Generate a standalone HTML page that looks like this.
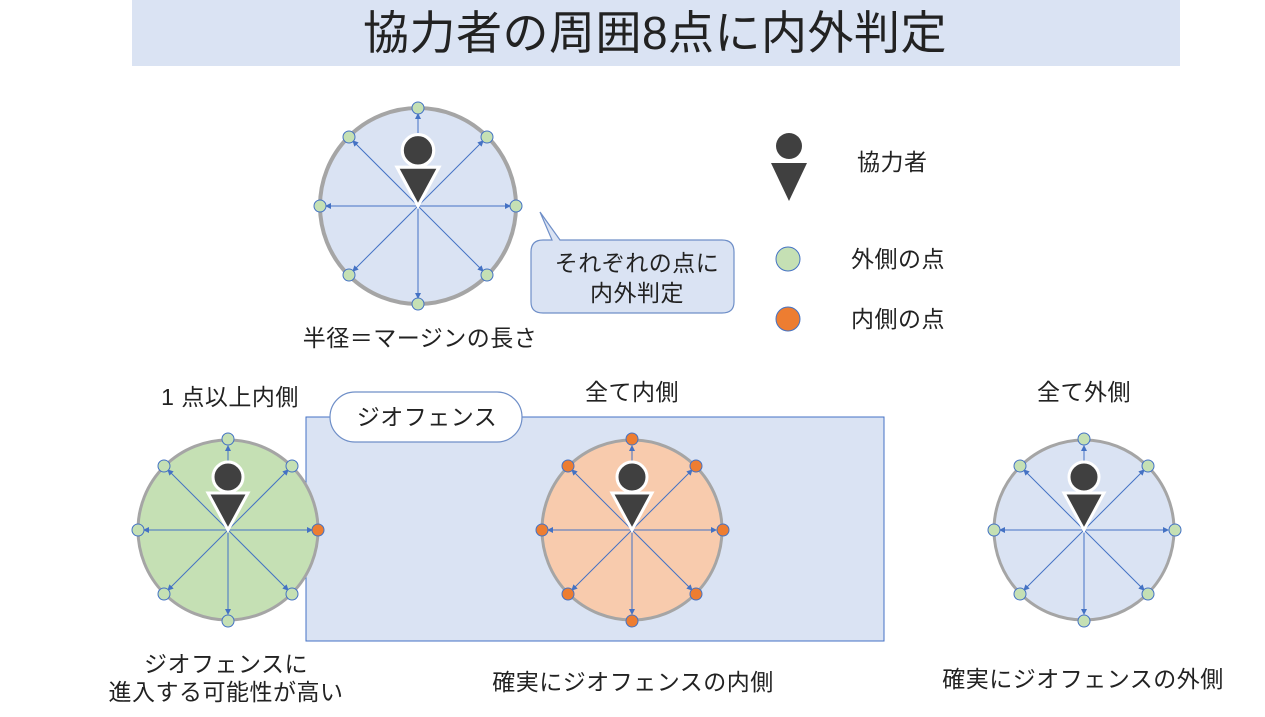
<!DOCTYPE html>
<html><head><meta charset="utf-8"><style>
body{margin:0;background:#fff;width:1265px;height:712px;overflow:hidden}
svg text{font-family:"Liberation Sans","Noto Sans CJK JP",sans-serif;fill:#222;letter-spacing:0.5px}
</style></head><body>
<svg width="1265" height="712" xmlns="http://www.w3.org/2000/svg">
<defs>
<marker id="a" markerWidth="6" markerHeight="6" refX="5" refY="3" orient="auto" markerUnits="userSpaceOnUse"><path d="M0,0L6,3L0,6z" fill="#4472c4"/></marker>
<g id="sp90" stroke="#4472c4" stroke-width="1" marker-end="url(#a)">
<line x1="0" y1="0" x2="0" y2="-84"/><line x1="0" y1="0" x2="60" y2="-60"/><line x1="0" y1="0" x2="84" y2="0"/><line x1="0" y1="0" x2="60" y2="60"/><line x1="0" y1="0" x2="0" y2="84"/><line x1="0" y1="0" x2="-60" y2="60"/><line x1="0" y1="0" x2="-84" y2="0"/><line x1="0" y1="0" x2="-60" y2="-60"/>
</g>
<g id="pers"><circle cx="0" cy="-53" r="15" fill="#404040" stroke="#fff" stroke-width="3"/><path d="M-20,-37L20,-37L0,0z" fill="#404040" stroke="#fff" stroke-width="3"/></g>
</defs>
<rect x="132" y="0" width="1048" height="66" fill="#dae3f3"/>
<text x="655" y="49" font-size="46" text-anchor="middle" letter-spacing="1">協力者の周囲8点に内外判定</text>

<circle cx="418" cy="206" r="98" fill="#dae3f3" stroke="#a5a5a5" stroke-width="4"/>
<g stroke="#4472c4" stroke-width="1" marker-end="url(#a)" transform="translate(418,206)">
<line x1="0" y1="0" x2="0" y2="-92"/><line x1="0" y1="0" x2="65" y2="-65"/><line x1="0" y1="0" x2="92" y2="0"/><line x1="0" y1="0" x2="65" y2="65"/><line x1="0" y1="0" x2="0" y2="92"/><line x1="0" y1="0" x2="-65" y2="65"/><line x1="0" y1="0" x2="-92" y2="0"/><line x1="0" y1="0" x2="-65" y2="-65"/></g>
<g fill="#c5e0b4" stroke="#4472c4" stroke-width="1">
<circle cx="418" cy="108" r="6"/><circle cx="487" cy="137" r="6"/><circle cx="516" cy="206" r="6"/><circle cx="487" cy="275" r="6"/><circle cx="418" cy="304" r="6"/><circle cx="349" cy="275" r="6"/><circle cx="320" cy="206" r="6"/><circle cx="349" cy="137" r="6"/></g>
<g transform="translate(418,206) scale(1.05)"><use href="#pers"/></g>
<text x="420" y="346" font-size="23" text-anchor="middle">半径＝マージンの長さ</text>

<path d="M540,212L560,240L722,240Q734,240 734,252L734,302Q734,313 722,313L543,313Q531,313 531,302L531,252Q531,240 543,240L552,240z" fill="#dae3f3" stroke="#6f8fc8" stroke-width="1.2"/>
<text x="637" y="271" font-size="23" text-anchor="middle">それぞれの点に</text>
<text x="637" y="301" font-size="23" text-anchor="middle">内外判定</text>

<circle cx="789" cy="146" r="13" fill="#404040"/><path d="M771,163L807,163L789,201z" fill="#404040"/>
<text x="857" y="170" font-size="23">協力者</text>
<circle cx="788" cy="259" r="12" fill="#c5e0b4" stroke="#4472c4" stroke-width="1"/>
<text x="851" y="267" font-size="23">外側の点</text>
<circle cx="788" cy="319" r="12" fill="#ed7d31" stroke="#4472c4" stroke-width="1"/>
<text x="851" y="327" font-size="23">内側の点</text>

<rect x="306" y="417" width="578" height="224" fill="#dae3f3" stroke="#4472c4" stroke-width="1"/>
<rect x="330" y="392" width="192" height="50" rx="25" fill="#fff" stroke="#6f8fc8" stroke-width="1.2"/>
<text x="427" y="425" font-size="23" text-anchor="middle" letter-spacing="3">ジオフェンス</text>

<text x="230" y="405" font-size="23" text-anchor="middle">1 点以上内側</text>
<circle cx="228" cy="530" r="90" fill="#c5e0b4" stroke="#a5a5a5" stroke-width="3"/>
<use href="#sp90" x="228" y="530"/>
<g fill="#c5e0b4" stroke="#4472c4" stroke-width="1">
<circle cx="228" cy="439" r="6"/><circle cx="292" cy="466" r="6"/><circle cx="292" cy="594" r="6"/><circle cx="228" cy="621" r="6"/><circle cx="164" cy="594" r="6"/><circle cx="138" cy="530" r="6"/><circle cx="164" cy="466" r="6"/></g>
<circle cx="318" cy="530" r="6" fill="#ed7d31" stroke="#4472c4"/>
<use href="#pers" x="228" y="530"/>
<text x="226" y="672" font-size="23" text-anchor="middle">ジオフェンスに</text>
<text x="226" y="700" font-size="23" text-anchor="middle">進入する可能性が高い</text>

<text x="632" y="400" font-size="23" text-anchor="middle">全て内側</text>
<circle cx="632" cy="530" r="90" fill="#f8cbad" stroke="#a5a5a5" stroke-width="3"/>
<use href="#sp90" x="632" y="530"/>
<g fill="#ed7d31" stroke="#4472c4" stroke-width="1">
<circle cx="632" cy="439" r="6"/><circle cx="696" cy="466" r="6"/><circle cx="723" cy="530" r="6"/><circle cx="696" cy="594" r="6"/><circle cx="632" cy="621" r="6"/><circle cx="568" cy="594" r="6"/><circle cx="542" cy="530" r="6"/><circle cx="568" cy="466" r="6"/></g>
<use href="#pers" x="632" y="530"/>
<text x="633" y="690" font-size="23" text-anchor="middle">確実にジオフェンスの内側</text>

<text x="1084" y="400" font-size="23" text-anchor="middle">全て外側</text>
<circle cx="1084" cy="530" r="90" fill="#dae3f3" stroke="#a5a5a5" stroke-width="3"/>
<use href="#sp90" x="1084" y="530"/>
<g fill="#c5e0b4" stroke="#4472c4" stroke-width="1">
<circle cx="1084" cy="439" r="6"/><circle cx="1148" cy="466" r="6"/><circle cx="1175" cy="530" r="6"/><circle cx="1148" cy="594" r="6"/><circle cx="1084" cy="621" r="6"/><circle cx="1020" cy="594" r="6"/><circle cx="994" cy="530" r="6"/><circle cx="1020" cy="466" r="6"/></g>
<use href="#pers" x="1084" y="530"/>
<text x="1083" y="687" font-size="23" text-anchor="middle">確実にジオフェンスの外側</text>
</svg>
</body></html>
